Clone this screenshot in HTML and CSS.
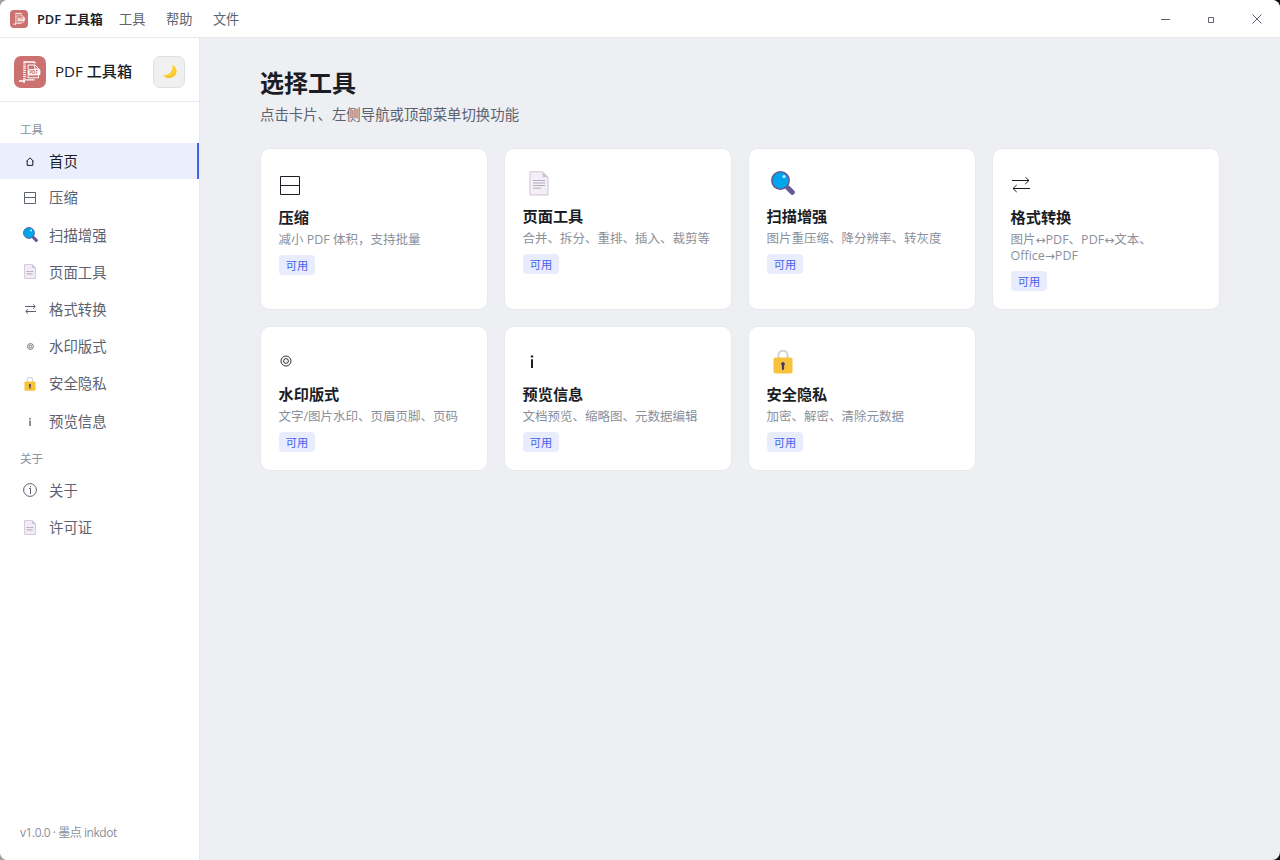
FILE: index.html
```html
<!DOCTYPE html>
<html lang="zh-CN">
<head>
    <meta charset="UTF-8">
    <meta name="viewport" content="width=device-width, initial-scale=1.0">
    <title>PDF 工具箱</title>
    <link rel="stylesheet" href="styles.css">
</head>
<body>

<!-- Shared icons -->
<svg class="defs" width="0" height="0">
    <symbol id="logo" viewBox="0 0 32 32">
        <rect width="32" height="32" rx="7" fill="#cb7170"/>
        <g fill="none" stroke="#fff">
            <path d="M9.500 6H19.500L21.500 7" stroke-width="1.600"/>
            <path d="M10.500 6.500v16" stroke-width="2.600" stroke-dasharray="1.100 .8"/>
            <path d="M14 13V9H21L25 13V14M14 19V21.800H24.500V19.500" stroke-width="1"/>
            <path d="M20.800 9V13H25" stroke-width=".9"/>
            <path d="M5 25H11M10 22.500V27M11 23.800H20.500" stroke-width="1.300"/>
            <rect x="14" y="13.500" width="12" height="5.500" rx="1.200" fill="#fff" stroke-width=".8"/>
        </g>
        <text x="15.200" y="18" class="logo-text">PDF</text>
    </symbol>
    <symbol id="doc" viewBox="0 0 20 25">
        <path d="M1 .800H13.500L19 6.200V24H1Z" fill="#f3eef8" stroke="#cdc5d3"/>
        <path d="M13.500.800V6.200H19Z" fill="#cdc5d6"/>
        <path d="M4 9.500H16M4 12H16M4 14.500H16M4 17.200H12" stroke="#b4abbc" stroke-width="1"/>
    </symbol>
    <symbol id="doc-small" viewBox="0 0 12 15">
        <path d="M.5.500H8.500L11.500 3.500V14.500H.500Z" fill="#f1ebf5" stroke="#d5cddb"/>
        <path d="M8 .500V4H11.500Z" fill="#cfc6d7"/>
        <path d="M2.500 7.500H9.500M2.500 9.800H8.500" stroke="#bdb3c6" stroke-width="1.200"/>
    </symbol>
    <symbol id="search" viewBox="0 0 24 24">
        <path d="M17 17L21.300 21.300" stroke="#635994" stroke-width="5" stroke-linecap="round"/>
        <circle cx="9.500" cy="9.500" r="8.700" fill="#00a6ed" stroke="#635994" stroke-width="1.500"/>
        <circle cx="13" cy="5.500" r="1.500" fill="#d3f3ff"/>
    </symbol>
    <symbol id="lock" viewBox="0 0 20 24">
        <path d="M5.500 8V5.200a4.500 4.500 0 0 1 9 0V8" fill="none" stroke="#d3d3d3" stroke-width="2"/>
        <rect x=".5" y="7.500" width="19" height="16" rx="2" fill="#f9c23c"/>
        <path d="M10 12a2 2 0 0 1 1.100 3.600V19a1.100 1.100 0 0 1-2.200 0v-3.400A2 2 0 0 1 10 12Z" fill="#433b6b"/>
    </symbol>
    <symbol id="compress" viewBox="0 0 20 19">
        <path d="M.5.500H19.500V18.500H.500ZM.500 9.500H19.500" fill="none" stroke="currentColor"/>
    </symbol>
    <symbol id="convert" viewBox="0 0 18 16">
        <path d="M0 3.500H17M13.300 0L17 3.500L13.300 7M18 11.500H1M4.700 8L1 11.500L4.700 15" fill="none" stroke="currentColor"/>
    </symbol>
</svg>

<div class="window">
    <header class="titlebar">
        <svg class="titlebar-logo"><use href="#logo"/></svg>
        <strong class="titlebar-name">PDF 工具箱</strong>
        <nav class="menu">
            <span>工具</span>
            <span>帮助</span>
            <span>文件</span>
        </nav>
        <div class="controls">
            <span><svg width="9" height="11" viewBox="0 0 9 11"><path d="M0 6.500H9" stroke="currentColor"/></svg></span>
            <span><svg class="low" width="6" height="6" viewBox="0 0 6 6"><path d="M.5.500H5.500V5.500H.500Z" fill="none" stroke="currentColor"/></svg></span>
            <span><svg width="10" height="10" viewBox="0 0 10 10"><path d="M.5.500L9.500 9.500M9.500.500L.500 9.500" stroke="currentColor"/></svg></span>
        </div>
    </header>

    <div class="layout">
        <aside class="sidebar">
            <div class="brand">
                <svg class="brand-logo"><use href="#logo"/></svg>
                <span class="brand-name">PDF 工具箱</span>
                <button class="theme">
                    <svg width="15" height="15" viewBox="0 0 15 15"><path d="M10.300.800C15.300 3.300 15.800 8.800 12.500 12 9 15.200 3.500 14.700.800 11.200 5 12.300 11.800 8 10.300.800Z" fill="#fcd034"/><path d="M14.500 6C14 11.500 8 15.500 2.500 12.500 8.500 13.300 12.500 11 14.500 6Z" fill="#f5b72e"/></svg>
                </button>
            </div>

            <nav class="nav">
                <div class="nav-label">工具</div>
                <a class="nav-item active"><span class="nav-icon"><svg width="8" height="9" viewBox="0 0 8 9"><path d="M.300 4.500L4 .800L7.700 4.500M1.200 3.800V8.400H6.800V3.800" fill="none" stroke="currentColor"/></svg></span><span class="nav-text">首页</span></a>
                <a class="nav-item"><span class="nav-icon"><svg width="12" height="12" viewBox="0 0 12 12"><path d="M.5.500H11.500V11.500H.500ZM.500 5.500H11.500" fill="none" stroke="currentColor"/></svg></span><span class="nav-text">压缩</span></a>
                <a class="nav-item"><span class="nav-icon"><svg width="15" height="15"><use href="#search"/></svg></span><span class="nav-text">扫描增强</span></a>
                <a class="nav-item"><span class="nav-icon"><svg width="12" height="15"><use href="#doc-small"/></svg></span><span class="nav-text">页面工具</span></a>
                <a class="nav-item"><span class="nav-icon"><svg width="11" height="10" viewBox="0 0 11 10"><path d="M0 2.500H10M8 .300L10.300 2.500L8 4.700M11 7.500H1M3 5.300L.700 7.500L3 9.700" fill="none" stroke="currentColor"/></svg></span><span class="nav-text">格式转换</span></a>
                <a class="nav-item"><span class="nav-icon"><svg width="7" height="7" viewBox="0 0 7 7"><circle cx="3.500" cy="3.500" r="2.900" fill="none" stroke="currentColor" stroke-width=".9"/><circle cx="3.500" cy="3.500" r="1.200" fill="none" stroke="currentColor" stroke-width=".8"/></svg></span><span class="nav-text">水印版式</span></a>
                <a class="nav-item"><span class="nav-icon"><svg width="12" height="14"><use href="#lock"/></svg></span><span class="nav-text">安全隐私</span></a>
                <a class="nav-item"><span class="nav-icon"><svg class="low" width="2" height="8" viewBox="0 0 2 8"><path d="M.300 0H1.700V1.500H.300ZM.300 2.500H1.700V8H.300Z" fill="currentColor"/></svg></span><span class="nav-text">预览信息</span></a>
                <div class="nav-label second">关于</div>
                <a class="nav-item"><span class="nav-icon"><svg width="14" height="14" viewBox="0 0 14 14"><circle cx="7" cy="7" r="6.400" fill="none" stroke="currentColor"/><path d="M7.500 3V4.300M6 5.500H7.500V11" fill="none" stroke="currentColor"/></svg></span><span class="nav-text">关于</span></a>
                <a class="nav-item"><span class="nav-icon"><svg width="12" height="15"><use href="#doc-small"/></svg></span><span class="nav-text">许可证</span></a>
            </nav>

            <div class="version">v1.0.0 · 墨点 inkdot</div>
        </aside>

        <main class="content">
            <h1>选择工具</h1>
            <p class="subtitle">点击卡片、左侧导航或顶部菜单切换功能</p>

            <div class="cards">
                <div class="card">
                    <div class="card-icon compress"><svg width="20" height="19"><use href="#compress"/></svg></div>
                    <h2>压缩</h2>
                    <p>减小 PDF 体积，支持批量</p>
                    <span class="badge">可用</span>
                </div>
                <div class="card">
                    <div class="card-icon emoji doc"><svg width="20" height="25"><use href="#doc"/></svg></div>
                    <h2>页面工具</h2>
                    <p>合并、拆分、重排、插入、裁剪等</p>
                    <span class="badge">可用</span>
                </div>
                <div class="card">
                    <div class="card-icon emoji search"><svg width="24" height="24"><use href="#search"/></svg></div>
                    <h2>扫描增强</h2>
                    <p>图片重压缩、降分辨率、转灰度</p>
                    <span class="badge">可用</span>
                </div>
                <div class="card">
                    <div class="card-icon convert"><svg width="18" height="16"><use href="#convert"/></svg></div>
                    <h2>格式转换</h2>
                    <p>图片<i>↔</i>PDF、PDF<i>↔</i>文本、<br>Office<i>→</i>PDF</p>
                    <span class="badge">可用</span>
                </div>
                <div class="card">
                    <div class="card-icon target"><svg width="12" height="12" viewBox="0 0 12 12"><circle cx="6" cy="6" r="5" fill="none" stroke="currentColor" stroke-width=".9"/><circle cx="6" cy="6" r="2.400" fill="none" stroke="currentColor" stroke-width=".9"/></svg></div>
                    <h2>水印版式</h2>
                    <p>文字/图片水印、页眉页脚、页码</p>
                    <span class="badge">可用</span>
                </div>
                <div class="card">
                    <div class="card-icon info"><svg width="4" height="13" viewBox="0 0 4 13"><path d="M.800.500H3.200V2.500H.800ZM1 4.200H3V13H1Z" fill="currentColor"/></svg></div>
                    <h2>预览信息</h2>
                    <p>文档预览、缩略图、元数据编辑</p>
                    <span class="badge">可用</span>
                </div>
                <div class="card">
                    <div class="card-icon lock"><svg width="20" height="24"><use href="#lock"/></svg></div>
                    <h2>安全隐私</h2>
                    <p>加密、解密、清除元数据</p>
                    <span class="badge">可用</span>
                </div>
            </div>
        </main>
    </div>
</div>

</body>
</html>
```
FILE: styles.css
```css
* {
    box-sizing: border-box;
}
body {
    margin: 0;
    background: linear-gradient(to right, #a0a0a0 50%, #111 50%);
    color: #1a1d26;
    font-family: "Open Sans", "Noto Sans CJK SC", sans-serif;
}
svg {
    display: block;
    flex: none;
}
.defs {
    display: none;
}
.logo-text {
    font-size: 4.6px;
    font-weight: bold;
    fill: #cb7170;
}
.window {
    display: flex;
    flex-direction: column;
    height: 860px;
    border-radius: 8px;
    overflow: hidden;
    background: #edeff3;
}

/* Title bar */
.titlebar {
    display: flex;
    align-items: center;
    height: 38px;
    padding-left: 10px;
    background: #fff;
    border-bottom: 1px solid #e8e9ec;
    font-size: 13.2px;
    line-height: 20px;
}
.titlebar-logo {
    width: 18px;
    height: 18px;
}
.titlebar-name {
    margin-left: 9px;
    width: 82px;
    font-size: 12.8px;
    font-weight: 600;
    white-space: nowrap;
}
.menu {
    display: flex;
    gap: 20.6px;
    color: #5c6270;
}
.controls {
    display: flex;
    margin-left: auto;
    color: #5c6270;
}
.controls span {
    display: flex;
    align-items: center;
    justify-content: center;
    width: 46px;
    height: 37px;
}
.controls .low {
    margin-top: 2px;
}

/* Sidebar */
.layout {
    display: flex;
    flex: 1;
}
.sidebar {
    display: flex;
    flex-direction: column;
    width: 200px;
    background: #fff;
    border-right: 1px solid #e8e9ec;
}
.brand {
    display: flex;
    align-items: center;
    height: 64px;
    padding: 4px 14px 0;
    border-bottom: 1px solid #e8e9ec;
}
.brand-logo {
    width: 32px;
    height: 32px;
}
.brand-name {
    margin-left: 9px;
    padding-bottom: 2px;
    font-size: 15.1px;
    font-weight: 500;
    line-height: 24px;
    white-space: nowrap;
}
.theme {
    display: flex;
    align-items: center;
    justify-content: center;
    width: 32px;
    height: 32px;
    margin-left: auto;
    padding: 0;
    background: #f0f0f0;
    border: 1px solid #dedfe1;
    border-radius: 7px;
}
.nav {
    flex: 1;
    padding-top: 18px;
}
.nav-label {
    height: 23px;
    padding-left: 20px;
    font-size: 11.5px;
    line-height: 20px;
    color: #8b909b;
}
.nav-label.second {
    margin-top: 10px;
    height: 22px;
}
.nav-item {
    display: flex;
    align-items: center;
    height: 37.2px;
    padding-left: 20px;
    font-size: 14.4px;
    line-height: 22px;
    color: #5c6270;
}
.nav-item.active {
    height: 36px;
    background: #ebeefd;
    border-right: 2px solid #4361ee;
    color: #1a1d26;
}
.nav-icon {
    display: flex;
    align-items: center;
    justify-content: center;
    width: 20px;
    margin-right: 9px;
}
.nav-text {
    padding-top: 1.6px;
}
.nav-icon .low {
    margin-top: 3px;
}
.version {
    padding: 0 20px 17px;
    font-size: 12px;
    letter-spacing: -0.45px;
    line-height: 20px;
    color: #8b909b;
    white-space: nowrap;
}

/* Home page */
.content {
    flex: 1;
    padding: 29px 60px;
}
h1 {
    margin: 0;
    font-size: 24px;
    font-weight: 700;
    line-height: 32px;
}
.subtitle {
    margin: 5px 0 22px;
    font-size: 14.4px;
    line-height: 22px;
    color: #5c6270;
}
.cards {
    display: grid;
    grid-template-columns: repeat(4, 1fr);
    grid-template-rows: 162px 145px;
    gap: 16px;
}
.card {
    padding: 19px 17.5px 17px;
    background: #fff;
    border: 1px solid #e8e9ec;
    border-radius: 10px;
}
.card-icon {
    display: flex;
    align-items: flex-start;
    height: 39px;
}
.card-icon.emoji {
    height: 38px;
}
.card-icon.compress {
    padding: 8px 0 0 1.5px;
}
.card-icon.doc {
    padding: 3px 0 0 6px;
}
.card-icon.search {
    padding: 3px 0 0 4px;
}
.card-icon.convert {
    padding: 9px 0 0 1.5px;
}
.card-icon.target {
    height: 38px;
    padding: 9px 0 0 1px;
}
.card-icon.info {
    height: 38px;
    padding: 9px 0 0 7.5px;
}
.card-icon.lock {
    height: 38px;
    padding: 4px 0 0 6.5px;
}
.card h2 {
    margin: 0 0 5px;
    font-size: 15.2px;
    font-weight: 600;
    line-height: 20px;
}
.card p {
    margin: 0 0 7px;
    font-size: 12.5px;
    line-height: 16px;
    color: #8b909b;
    white-space: nowrap;
}
.card i {
    font-family: "DejaVu Sans", sans-serif;
    font-size: 12px;
    font-style: normal;
    line-height: 1;
}
.badge {
    display: block;
    width: 36px;
    height: 20px;
    margin-left: .5px;
    padding-top: 1px;
    border-radius: 4px;
    background: #e8ecfd;
    color: #4361ee;
    font-size: 11.2px;
    line-height: 20px;
    text-align: center;
}
```
